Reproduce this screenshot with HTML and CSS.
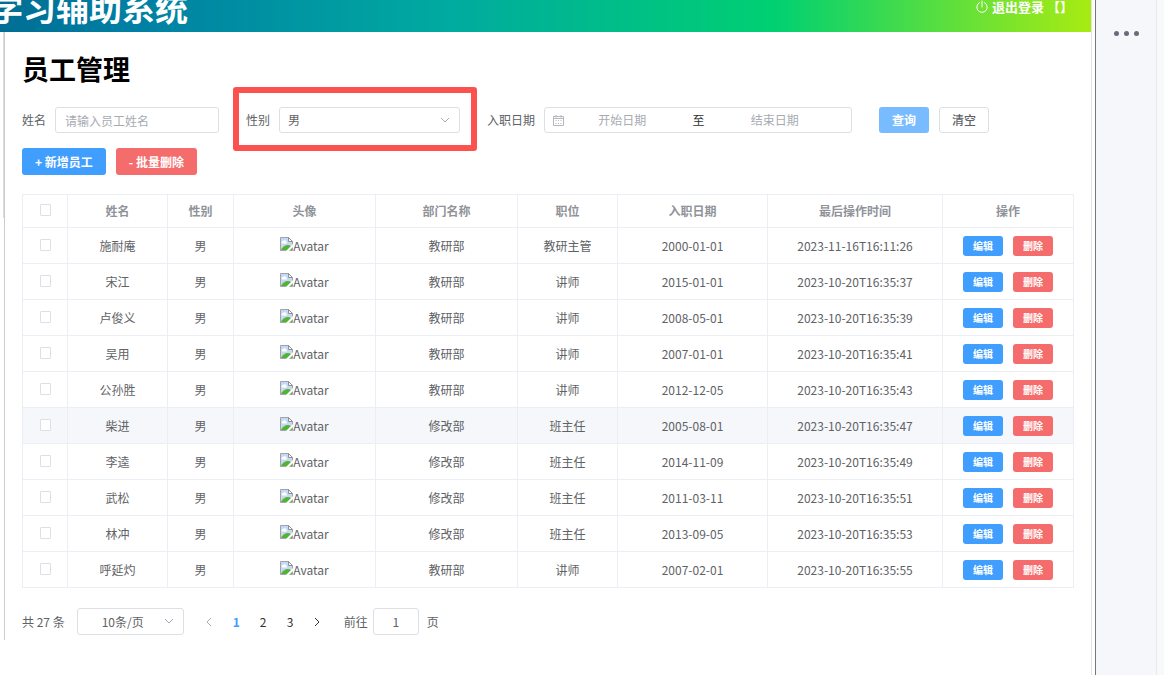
FILE: index.html
```html
<!DOCTYPE html>
<html lang="zh-CN">
<head>
  <meta charset="UTF-8">
  <title>员工管理</title>
  <link rel="stylesheet" href="styles.css">
</head>
<body>
  <div class="app">
    <header class="header">
      <div class="brand">学习辅助系统</div>
      <a href="#" class="logout">
        <svg width="12" height="14" viewBox="0 0 12 14" fill="none" stroke="currentColor" stroke-linecap="round">
          <path d="M6 1v6M3.600 2.500A5.200 5.200 0 1 0 8.400 2.500"/>
        </svg>
        <span>退出登录 【】</span>
      </a>
    </header>

    <main class="content">
      <h1>员工管理</h1>

      <form class="search">
        <div class="item item-name">
          <label for="name">姓名</label>
          <input id="name" class="field" type="text" placeholder="请输入员工姓名">
        </div>
        <div class="item item-gender">
          <label for="gender">性别</label>
          <div class="select">
            <select id="gender" class="field">
              <option>男</option>
              <option>女</option>
            </select>
            <svg class="arrow" viewBox="0 0 10 10"><path d="M1 3l4 4 4-4"/></svg>
          </div>
        </div>
        <div class="item item-date">
          <label for="begin">入职日期</label>
          <div class="field range">
            <svg class="calendar" width="11" height="11" viewBox="0 0 11 11">
              <path d="M.5 1.500h10v9H.5zM.5 3.500h10M3 0v2.500M8 0v2.500M2.500 5.500h1M5 5.500h1M7.500 5.500h1M2.500 8.500h1M5 8.500h1M7.500 8.500h1"/>
            </svg>
            <input id="begin" type="text" placeholder="开始日期">
            <span class="to">至</span>
            <input id="end" type="text" placeholder="结束日期" aria-label="结束日期">
          </div>
        </div>
        <button type="button" class="btn query">查询</button>
        <button type="reset" class="btn plain">清空</button>
      </form>

      <div class="actions">
        <button class="btn primary">+ 新增员工</button>
        <button class="btn danger">- 批量删除</button>
      </div>

      <table>
        <colgroup>
          <col class="w45"><col class="w100"><col class="w66"><col class="w142"><col class="w142">
          <col class="w100"><col class="w150"><col class="w175"><col>
        </colgroup>
        <thead>
          <tr>
            <th><input type="checkbox" aria-label="全选"></th>
            <th>姓名</th>
            <th>性别</th>
            <th>头像</th>
            <th>部门名称</th>
            <th>职位</th>
            <th>入职日期</th>
            <th>最后操作时间</th>
            <th>操作</th>
          </tr>
        </thead>
        <tbody id="rows"></tbody>
      </table>

      <div class="pagination">
        <span>共 27 条</span>
        <div class="select size">
          <select class="field" aria-label="每页条数">
            <option>10条/页</option>
            <option>20条/页</option>
          </select>
          <svg class="arrow" viewBox="0 0 10 10"><path d="M1 3l4 4 4-4"/></svg>
        </div>
        <div class="pager">
          <button class="prev" aria-label="上一页" disabled><svg viewBox="0 0 10 10"><path d="M7 1L3 5l4 4"/></svg></button>
          <button class="active">1</button>
          <button>2</button>
          <button>3</button>
          <button aria-label="下一页"><svg viewBox="0 0 10 10"><path d="M3 1l4 4-4 4"/></svg></button>
        </div>
        <label for="page">前往</label>
        <input id="page" class="field jump" type="text" value="1">
        <span>页</span>
      </div>
    </main>
  </div>

  <aside class="side">
    <button class="more" aria-label="更多"><i></i><i></i><i></i></button>
  </aside>

  <script>
    const emps = [
      ['施耐庵', '教研部', '教研主管', '2000-01-01', '2023-11-16T16:11:26'],
      ['宋江', '教研部', '讲师', '2015-01-01', '2023-10-20T16:35:37'],
      ['卢俊义', '教研部', '讲师', '2008-05-01', '2023-10-20T16:35:39'],
      ['吴用', '教研部', '讲师', '2007-01-01', '2023-10-20T16:35:41'],
      ['公孙胜', '教研部', '讲师', '2012-12-05', '2023-10-20T16:35:43'],
      ['柴进', '修改部', '班主任', '2005-08-01', '2023-10-20T16:35:47'],
      ['李逵', '修改部', '班主任', '2014-11-09', '2023-10-20T16:35:49'],
      ['武松', '修改部', '班主任', '2011-03-11', '2023-10-20T16:35:51'],
      ['林冲', '修改部', '班主任', '2013-09-05', '2023-10-20T16:35:53'],
      ['呼延灼', '教研部', '讲师', '2007-02-01', '2023-10-20T16:35:55']
    ];

    const avatar = `<span class="avatar">
      <svg width="13" height="14" viewBox="0 0 13 14">
        <path d="M.5.5h8l4 4v9H.5z" fill="#c6d8f5" stroke="#a0a4a8"/>
        <path d="M8.500.5v4h4z" fill="#fff" stroke="#8c9094"/>
        <path d="M2 6.500a1.500 1.500 0 0 1 1-2.500 2 2 0 0 1 3.500 1A1 1 0 0 1 6.500 6.500z" fill="#fff"/>
        <path d="M1 13c1-3 4-5 7-5 2 0 3 1 4 2v3z" fill="#53b332"/>
        <path d="M13 7L6 14h3l4-4z" fill="#fff"/>
      </svg>Avatar</span>`;

    // row 6 is shown in its hover state
    document.getElementById('rows').innerHTML = emps.map((e, i) => `
      <tr${i === 5 ? ' class="hover"' : ''}>
        <td><input type="checkbox" aria-label="${e[0]}"></td>
        <td>${e[0]}</td>
        <td>男</td>
        <td>${avatar}</td>
        <td>${e[1]}</td>
        <td>${e[2]}</td>
        <td>${e[3]}</td>
        <td>${e[4]}</td>
        <td>
          <div class="ops">
            <button class="btn primary mini">编辑</button>
            <button class="btn danger mini">删除</button>
          </div>
        </td>
      </tr>`).join('');
  </script>
</body>
</html>
```
FILE: styles.css
```css
* {
  box-sizing: border-box;
}

body {
  margin: 0;
  min-height: 100vh;
  display: flex;
  overflow: hidden;
  font-family: "Noto Sans CJK SC", sans-serif;
  font-size: 12px;
  line-height: 18px;
  color: #606266;
  background: #fff;
}

input, select, button {
  font: inherit;
  color: inherit;
  margin: 0;
}

button {
  cursor: pointer;
}

.app {
  flex: 1;
  min-width: 0;
  border-right: 1px solid #e4e4e4;
}

/* Header, its top part is scrolled out of view */
.header {
  height: 50px;
  margin-top: -18px;
  padding-right: 18px;
  display: flex;
  align-items: center;
  justify-content: space-between;
  overflow: hidden;
  color: #fff;
  background: linear-gradient(to right, #006e94, #007fa4 12%, #00aaa0 41%, #00d072 71%, #a8eb12);
}

.brand {
  margin-left: -10px;
  font-family: KaiTi, STKaiti, "Noto Sans CJK SC", serif;
  font-size: 33px;
  line-height: 50px;
  font-weight: bold;
}

.logout {
  display: flex;
  align-items: center;
  gap: 4px;
  font-size: 13px;
  font-weight: bold;
  color: #fff;
  text-decoration: none;
}

.content {
  position: relative;
  margin-left: 4px;
  padding: 18px 17px 5px;
  border-left: 1px solid #ccc;
}

.content::before {
  content: "";
  position: absolute;
  left: -2px;
  top: 0;
  width: 1px;
  height: 186px;
  background: #ddd;
}

h1 {
  margin: 0 0 19px;
  font-size: 27px;
  line-height: 38px;
  color: #000;
}

/* Search form */
.search {
  display: flex;
  align-items: center;
}

.item {
  display: flex;
  align-items: center;
  gap: 9px;
  position: relative;
}

.item-name {
  margin-right: 27px;
}

.item-gender {
  margin-right: 27px;
}

.item-gender::after {
  content: "";
  position: absolute;
  inset: -20px -17px -18px -13px;
  border: 6px solid #fb5250;
  border-radius: 3px;
  pointer-events: none;
}

.item-date {
  margin-right: 27px;
}

.field {
  height: 26px;
  padding: 0 9px;
  border: 1px solid #dcdfe6;
  border-radius: 3px;
  background: #fff;
  outline: none;
}

::placeholder {
  color: #a8abb2;
  opacity: 1;
}

#name {
  width: 164px;
}

.select {
  position: relative;
  width: 181px;
}

.select select {
  width: 100%;
  padding: 0 8px;
  appearance: none;
}

.arrow {
  position: absolute;
  right: 10px;
  top: 8px;
}

svg {
  flex: none;
}

.arrow, .pager svg {
  width: 10px;
  height: 10px;
  fill: none;
  stroke: #a8abb2;
}

.range {
  width: 308px;
  padding: 0 18px 0 8px;
  display: flex;
  align-items: center;
}

.calendar {
  fill: none;
  stroke: #b4b7be;
}

.range input {
  flex: 1;
  min-width: 0;
  padding: 0;
  border: 0;
  outline: none;
  text-align: center;
  background: none;
}

.to {
  width: 36px;
  text-align: center;
  color: #303133;
}

.btn {
  height: 26px;
  padding: 0 12px;
  border: 1px solid transparent;
  border-radius: 3px;
  font-weight: bold;
  line-height: 18px;
  color: #fff;
  white-space: nowrap;
}

.query {
  background: #79bbff;
}

.plain {
  margin-left: 10px;
  font-weight: 500;
  color: #606266;
  background: #fff;
  border-color: #dcdfe6;
}

.primary {
  background: #409eff;
}

.danger {
  background: #f56c6c;
}

.actions {
  display: flex;
  gap: 10px;
  margin: 15px 0 19px;
}

.actions .btn {
  height: 27px;
}

/* Employee table */
table {
  width: 100%;
  table-layout: fixed;
  border-collapse: collapse;
}

.w45 { width: 45px; }
.w66 { width: 66px; }
.w100 { width: 100px; }
.w142 { width: 142px; }
.w150 { width: 150px; }
.w175 { width: 175px; }

th, td {
  height: 36px;
  padding: 0;
  border: 1px solid #ebeef5;
  text-align: center;
}

th {
  height: 33px;
  color: #909399;
}

.hover {
  background: #f5f7fa;
}

input[type="checkbox"] {
  display: block;
  width: 11px;
  height: 12px;
  margin: 0 auto 2px;
  appearance: none;
  border: 1px solid #dcdfe6;
  border-radius: 1px;
  background: #fff;
}

.avatar {
  display: flex;
  justify-content: center;
  align-items: flex-start;
}

.ops {
  display: flex;
  justify-content: center;
  gap: 10px;
}

.mini {
  height: 20px;
  padding: 0 9px;
  font-size: 10px;
}

/* Pagination */
.pagination {
  display: flex;
  align-items: center;
  margin-top: 20px;
}

.pagination .field {
  height: 27px;
}

.size {
  width: 107px;
  margin: 0 12px;
}

.size select {
  padding: 0 24px;
}

.pager {
  display: flex;
  margin-right: 13px;
}

.pager button {
  width: 27px;
  height: 27px;
  padding: 0;
  border: 0;
  background: none;
  color: #303133;
}

.pager svg {
  stroke: #303133;
}

.pager .prev svg {
  stroke: #a8abb2;
}

.pager .active {
  font-weight: bold;
  color: #409eff;
}

.jump {
  width: 46px;
  margin: 0 8px 0 5px;
  text-align: center;
}

/* Side strip */
.side {
  width: 69px;
  margin-left: 3px;
  padding: 26px 15px;
  border-left: 1px solid #77777a;
  background: linear-gradient(to left, #f8f9fb 7px, #e9eaee 7px, #e9eaee 8px, #f6f7fa 8px);
}

.more {
  display: flex;
  align-items: center;
  gap: 5px;
  height: 14px;
  padding: 0 3px;
  border: 0;
  background: none;
}

.more i {
  width: 5px;
  height: 5px;
  border-radius: 50%;
  background: #6b6b7b;
}
```
